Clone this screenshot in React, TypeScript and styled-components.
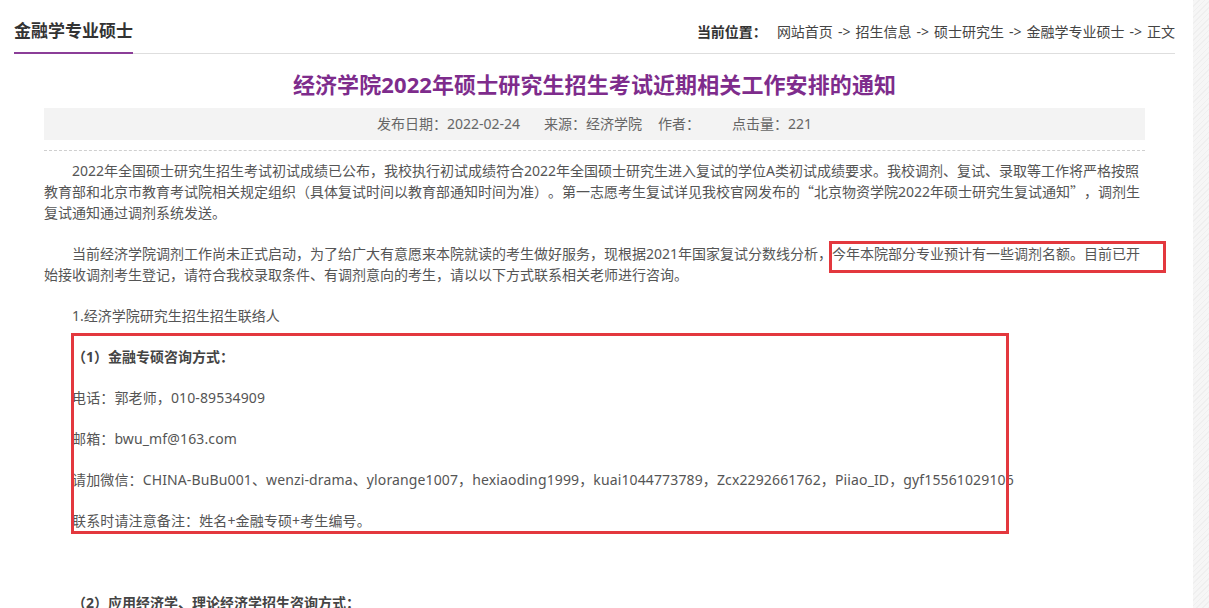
import React from "react";
import styled, { createGlobalStyle } from "styled-components";

const Global = createGlobalStyle`
  html, body { margin: 0; padding: 0; overflow: hidden; background: #fff; }
  body {
    font-family: "Noto Sans", "Noto Sans CJK SC", sans-serif;
    color: #555;
    text-spacing-trim: space-all;
  }
  * { box-sizing: border-box; }
`;

const Shell = styled.div`
  display: flex;
  width: 1209px;
  min-height: 608px;
  position: relative;
`;

const Main = styled.div`
  flex: 0 0 1193px;
  background: #fff;
  padding: 0 18px 0 14px;
`;

const Aside = styled.div`
  flex: 1;
  background-color: #f4f4f4;
  background-image: repeating-linear-gradient(
    135deg,
    #efefef 0px,
    #efefef 1px,
    #f6f6f6 1px,
    #f6f6f6 4px
  );
`;

const Header = styled.div`
  display: flex;
  justify-content: space-between;
  border-bottom: 1px solid #dedede;
`;

const SectionTitle = styled.h2`
  margin: 0 0 -1px;
  padding: 21px 0 11px;
  font-size: 17px;
  line-height: 20px;
  font-weight: 700;
  color: #333;
  border-bottom: 2px solid #8b3e98;
`;

const Crumbs = styled.div`
  padding-top: 22px;
  font-size: 14px;
  line-height: 20px;
  color: #444;
  white-space: nowrap;
`;

const CrumbLabel = styled.b`
  color: #333;
  margin-right: 10px;
`;

const Arrow = styled.span`
  margin: 0 5px;
`;

const Article = styled.div`
  padding: 0 30px;
`;

const ArticleTitle = styled.h1`
  margin: 15px 0 9px;
  text-align: center;
  font-size: 22px;
  line-height: 30px;
  font-weight: 700;
  color: #7e2c8c;
  letter-spacing: 0.1px;
`;

const Meta = styled.div`
  height: 32px;
  line-height: 32px;
  background: #f3f3f3;
  text-align: center;
  font-size: 14px;
  color: #666;
`;

const MetaItem = styled.span<{ $gap?: number }>`
  margin-left: ${(p) => p.$gap ?? 0}px;
`;

const Body = styled.div`
  margin-top: 10px;
  border-top: 1px dashed #cfcfcf;
  padding-top: 9px;
`;

const P = styled.p<{ $indent?: boolean; $bold?: boolean }>`
  margin: 0 0 20px;
  font-size: 14px;
  line-height: 21px;
  color: ${(p) => (p.$bold ? "#444" : "#555")};
  font-weight: ${(p) => (p.$bold ? 700 : 400)};
  text-indent: ${(p) => (p.$indent ? "28px" : "0")};
  min-height: 21px;
`;

const Quote = styled.span`
  font-family: "Noto Sans CJK SC", sans-serif;
`;

const Contact = styled.p`
  margin: 0 0 20px 28px;
  font-size: 14px;
  line-height: 21px;
  color: #555;
  white-space: nowrap;
  letter-spacing: 0.13px;
`;

const Mark = styled.div`
  position: absolute;
  border: 3px solid #e3383e;
  pointer-events: none;
`;

const crumbs = ["网站首页", "招生信息", "硕士研究生", "金融学专业硕士", "正文"];

export default function App() {
  return (
    <>
      <Global />
      <Shell>
        <Main>
          <Header>
            <SectionTitle>金融学专业硕士</SectionTitle>
            <Crumbs>
              <CrumbLabel>当前位置：</CrumbLabel>
              {crumbs.map((c, i) => (
                <React.Fragment key={c}>
                  {i > 0 && <Arrow>-&gt;</Arrow>}
                  {c}
                </React.Fragment>
              ))}
            </Crumbs>
          </Header>
          <Article>
            <ArticleTitle>经济学院2022年硕士研究生招生考试近期相关工作安排的通知</ArticleTitle>
            <Meta>
              <MetaItem>发布日期：2022-02-24</MetaItem>
              <MetaItem $gap={24}>来源：经济学院</MetaItem>
              <MetaItem $gap={16}>作者：</MetaItem>
              <MetaItem $gap={32}>点击量：221</MetaItem>
            </Meta>
            <Body>
              <P $indent>
                2022年全国硕士研究生招生考试初试成绩已公布，我校执行初试成绩符合2022年全国硕士研究生进入复试的学位A类初试成绩要求。我校调剂、复试、录取等工作将严格按照教育部和北京市教育考试院相关规定组织（具体复试时间以教育部通知时间为准）。第一志愿考生复试详见我校官网发布的<Quote>“</Quote>北京物资学院2022年硕士研究生复试通知<Quote>”</Quote>，调剂生复试通知通过调剂系统发送。
              </P>
              <P $indent>
                当前经济学院调剂工作尚未正式启动，为了给广大有意愿来本院就读的考生做好服务，现根据2021年国家复试分数线分析，今年本院部分专业预计有一些调剂名额。目前已开始接收调剂考生登记，请符合我校录取条件、有调剂意向的考生，请以以下方式联系相关老师进行咨询。
              </P>
              <P $indent>1.经济学院研究生招生招生联络人</P>
              <P $indent $bold>（1）金融专硕咨询方式：</P>
              <Contact>电话：郭老师，010-89534909</Contact>
              <Contact>邮箱：bwu_mf@163.com</Contact>
              <Contact>
                请加微信：CHINA-BuBu001、wenzi-drama、ylorange1007，hexiaoding1999，kuai1044773789，Zcx2292661762，Piiao_ID，gyf15561029106
              </Contact>
              <Contact>联系时请注意备注：姓名+金融专硕+考生编号。</Contact>
              <P />
              <P $indent $bold>（2）应用经济学、理论经济学招生咨询方式：</P>
            </Body>
          </Article>
        </Main>
        <Aside />
        <Mark style={{ left: 829, top: 241, width: 337, height: 32 }} />
        <Mark style={{ left: 71, top: 333, width: 938, height: 201 }} />
      </Shell>
    </>
  );
}
